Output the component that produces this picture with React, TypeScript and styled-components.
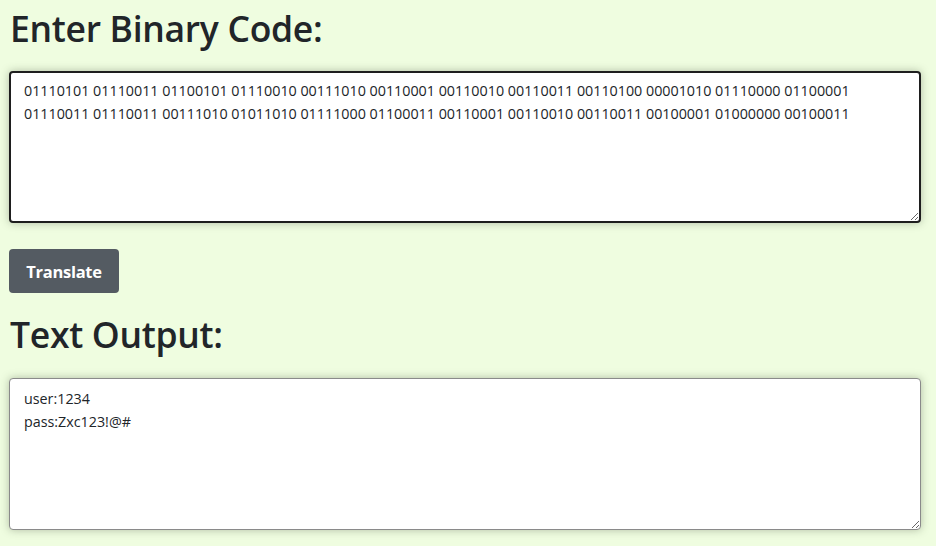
import React, { useState } from "react";
import styled, { createGlobalStyle } from "styled-components";

const Global = createGlobalStyle`
  html, body {
    margin: 0;
    padding: 0;
    background: #effde0;
  }
  body {
    font-family: "Open Sans", "Liberation Sans", sans-serif;
    color: #212529;
  }
`;

const Page = styled.main`
  display: flex;
  flex-direction: column;
  align-items: flex-start;
  padding: 7px 15px 14px 9px;
  box-sizing: border-box;
  width: 936px;
`;

const Heading = styled.h1<{ $gap: number }>`
  margin: 0 0 ${(p) => p.$gap}px 1px;
  font-family: "Open Sans", "Noto Sans", sans-serif;
  font-weight: 600;
  font-size: 35.5px;
  line-height: 43px;
  letter-spacing: -0.3px;
  color: #212529;
`;

const Area = styled.textarea<{ $focused?: boolean }>`
  display: block;
  width: 912px;
  height: 152px;
  box-sizing: border-box;
  margin: 0;
  padding: ${(p) => (p.$focused ? "7px 13px" : "9px 14px")};
  border: ${(p) => (p.$focused ? "2px solid #1e1e1e" : "1px solid #8a8a8a")};
  border-radius: 4px;
  background: #ffffff;
  box-shadow: 0 0 8px rgba(60, 70, 50, 0.35);
  font-family: "Open Sans", "Noto Sans", sans-serif;
  font-size: 14.3px;
  line-height: 22.5px;
  color: #212529;
  outline: none;
  resize: both;
  white-space: pre-wrap;
`;

const Button = styled.button`
  margin: 26px 0 0 0;
  width: 110px;
  height: 44px;
  border: none;
  border-radius: 4px;
  background: #545b62;
  color: #ffffff;
  font-family: "Open Sans", "Noto Sans", sans-serif;
  font-weight: 700;
  font-size: 16.5px;
  letter-spacing: -0.3px;
  cursor: pointer;
`;

const OutputBlock = styled.section`
  display: flex;
  flex-direction: column;
  margin-top: 20px;
`;

const INPUT =
  "01110101 01110011 01100101 01110010 00111010 00110001 00110010 00110011 00110100 00001010 01110000 01100001\n01110011 01110011 00111010 01011010 01111000 01100011 00110001 00110010 00110011 00100001 01000000 00100011";

export default function App() {
  const [input, setInput] = useState(INPUT);
  const [output, setOutput] = useState("user:1234\npass:Zxc123!@#");

  const translate = () => {
    const text = input
      .trim()
      .split(/\s+/)
      .map((b) => String.fromCharCode(parseInt(b, 2)))
      .join("");
    setOutput(text);
  };

  return (
    <>
      <Global />
      <Page>
        <Heading $gap={21}>Enter Binary Code:</Heading>
        <Area
          $focused
          value={input}
          spellCheck={false}
          onChange={(e) => setInput(e.target.value)}
        />
        <Button onClick={translate}>Translate</Button>
        <OutputBlock>
          <Heading $gap={22}>Text Output:</Heading>
          <Area value={output} readOnly spellCheck={false} />
        </OutputBlock>
      </Page>
    </>
  );
}
